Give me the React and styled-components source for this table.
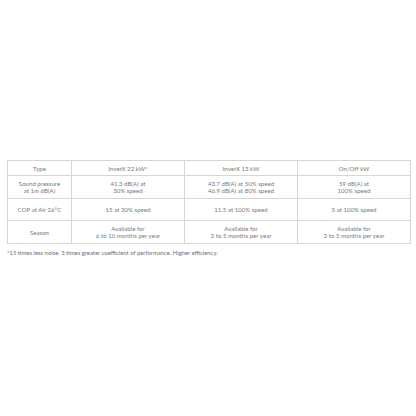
import React from "react";
import styled, { createGlobalStyle } from "styled-components";

const GlobalStyle = createGlobalStyle`
  html, body {
    margin: 0;
    padding: 0;
    background: #fff;
  }
  body {
    font-family: "Lato", "Open Sans", sans-serif;
    color: #6e6e6e;
  }
`;

const rows = [
  { h: 15, cells: ["Type", "InverX 22 kW*", "InverX 13 kW", "On/Off kW"] },
  {
    h: 23,
    cells: [
      ["Sound pressure", "at 1m dB(A)"],
      ["41.3 dB(A) at", "30% speed"],
      ["43.7 dB(A) at 50% speed", "46.9 dB(A) at 80% speed"],
      ["59 dB(A) at", "100% speed"],
    ],
  },
  { h: 22, cells: ["COP at Air 26°C", "15 at 30% speed", "11.5 at 100% speed", "5 at 100% speed"] },
  {
    h: 23,
    cells: [
      "Season",
      ["Available for", "6 to 10 months per year"],
      ["Available for", "3 to 5 months per year"],
      ["Available for", "3 to 5 months per year"],
    ],
  },
];

const Page = styled.div`
  width: 416px;
  height: 416px;
  padding: 160px 7px 0 7px;
  box-sizing: border-box;
`;

const Table = styled.table`
  width: 403px;
  border-collapse: collapse;
  table-layout: fixed;
`;

const Col = styled.col`
  width: ${(p) => (p.$first ? "64px" : "113px")};
`;

const Row = styled.tr`
  height: ${(p) => p.$h}px;
`;

const Cell = styled.td`
  border: 1px solid #d6d6d6;
  padding: 0 2px;
  text-align: center;
  vertical-align: middle;
  font-size: 6px;
  line-height: 7px;
  color: #787878;
  white-space: nowrap;
  letter-spacing: 0.05px;
`;

const Note = styled.p`
  margin: 5px 0 0 0;
  font-size: 5.9px;
  line-height: 7px;
  color: #707070;
`;

const renderText = (t) =>
  Array.isArray(t)
    ? t.map((line, i) => (
        <React.Fragment key={i}>
          {i > 0 && <br />}
          {line}
        </React.Fragment>
      ))
    : t;

const App = () => {
  return (
    <Page>
      <GlobalStyle />
      <Table>
        <colgroup>
          <Col $first />
          <Col />
          <Col />
          <Col />
        </colgroup>
        <tbody>
          {rows.map((r, i) => (
            <Row key={i} $h={r.h}>
              {r.cells.map((c, j) => (
                <Cell key={j}>{renderText(c)}</Cell>
              ))}
            </Row>
          ))}
        </tbody>
      </Table>
      <Note>*15 times less noise. 3 times greater coefficient of performance. Higher efficiency.</Note>
    </Page>
  );
};

export default App;
